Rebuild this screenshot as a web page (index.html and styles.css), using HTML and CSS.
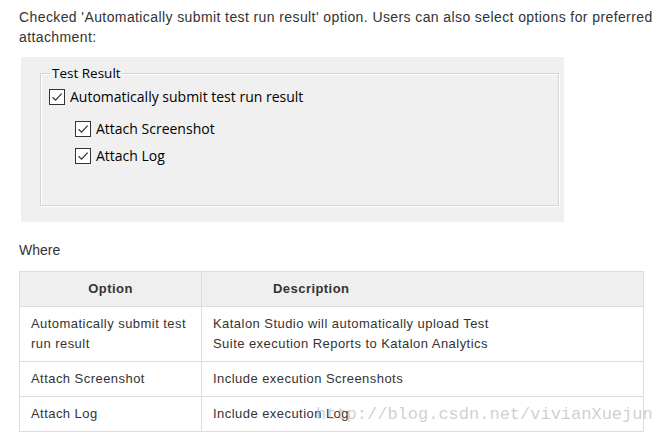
FILE: index.html
```html
<!DOCTYPE html>
<html lang="en">
<head>
<meta charset="UTF-8">
<title>Test Result options</title>
<link rel="stylesheet" href="styles.css">
</head>
<body>
<p class="intro">Checked 'Automatically submit test run result' option. Users can also select options for preferred attachment:</p>

<div class="shot">
    <fieldset class="group">
        <legend>Test Result</legend>
        <label class="check"><span class="box"><svg viewBox="0 0 16 16" width="16" height="16"><rect x="0.5" y="0.5" width="15" height="15" fill="#fff" stroke="#333"/><path d="M3.5 8.2 L6.6 11.2 L12.6 4.6" fill="none" stroke="#333" stroke-width="1.2"/></svg></span>Automatically submit test run result</label>
        <div class="sub">
            <label class="check"><span class="box"><svg viewBox="0 0 16 16" width="16" height="16"><rect x="0.5" y="0.5" width="15" height="15" fill="#fff" stroke="#333"/><path d="M3.5 8.2 L6.6 11.2 L12.6 4.6" fill="none" stroke="#333" stroke-width="1.2"/></svg></span>Attach Screenshot</label>
            <label class="check"><span class="box"><svg viewBox="0 0 16 16" width="16" height="16"><rect x="0.5" y="0.5" width="15" height="15" fill="#fff" stroke="#333"/><path d="M3.5 8.2 L6.6 11.2 L12.6 4.6" fill="none" stroke="#333" stroke-width="1.2"/></svg></span>Attach Log</label>
        </div>
    </fieldset>
</div>

<p class="where">Where</p>

<table class="opts">
    <thead>
        <tr>
            <th class="col-opt">Option</th>
            <th class="col-desc">Description</th>
        </tr>
    </thead>
    <tbody>
        <tr>
            <td>Automatically submit test run result</td>
            <td>Katalon Studio will automatically upload Test<br>Suite execution Reports to Katalon Analytics</td>
        </tr>
        <tr>
            <td>Attach Screenshot</td>
            <td>Include execution Screenshots</td>
        </tr>
        <tr>
            <td>Attach Log</td>
            <td>Include execution Log</td>
        </tr>
    </tbody>
</table>

<div class="watermark">http://blog.csdn.net/vivianXuejun</div>
</body>
</html>
```

FILE: styles.css
```css
body {
    margin: 0;
    padding: 0 0 0 19px;
    font-family: "Liberation Sans", Arial, sans-serif;
    font-size: 14px;
    line-height: 20px;
    color: #333;
    background: #fff;
    position: relative;
}

.intro {
    margin: 7px 0 0;
    letter-spacing: 0.4px;
}

/* screenshot of the settings dialog */
.shot {
    width: 543px;
    height: 165px;
    margin: 10px 0 0 2px;
    padding: 8px 5px 16px 19px;
    box-sizing: border-box;
    background: #f0f0f0;
    font-family: "Open Sans", "Noto Sans", sans-serif;
    color: #000;
    letter-spacing: 0;
}

.group {
    margin: 0;
    height: 100%;
    box-sizing: border-box;
    border: 1px solid #d5d5d5;
    box-shadow: inset 1px 1px 0 #fff, 1px 1px 0 #fff;
    padding: 0 0 0 8px;
}
.group legend {
    font-size: 13.5px;
    padding: 0 1px 0 2px;
    margin-left: 1px;
    line-height: 16px;
}

.check {
    display: flex;
    align-items: center;
    gap: 5px;
    font-size: 14px;
    line-height: 16px;
    height: 16px;
}
.check .box {
    display: flex;
}

.group > .check {
    margin-top: 8px;
}

.sub {
    display: flex;
    flex-direction: column;
    gap: 11px;
    padding-left: 26px;
    margin-top: 16px;
}

.where {
    margin: 18px 0 0;
}

.opts {
    margin-top: 11px;
    width: 625px;
    border-collapse: collapse;
    border: 1px solid #ddd;
    font-size: 13px;
    letter-spacing: 0.45px;
}
.opts th,
.opts td {
    border: 1px solid #ddd;
    padding: 7px 11px;
    text-align: left;
    vertical-align: top;
    font-weight: normal;
}
.opts th {
    background: #efefef;
    font-weight: bold;
}
.opts .col-opt {
    width: 159px;
    text-align: center;
}
.opts .col-desc {
    padding-left: 71px;
}

.watermark {
    position: absolute;
    left: 316px;
    top: 405px;
    font-family: "Liberation Mono", monospace;
    font-size: 17px;
    line-height: 20px;
    color: rgba(175, 175, 175, 0.6);
    white-space: nowrap;
}
```
